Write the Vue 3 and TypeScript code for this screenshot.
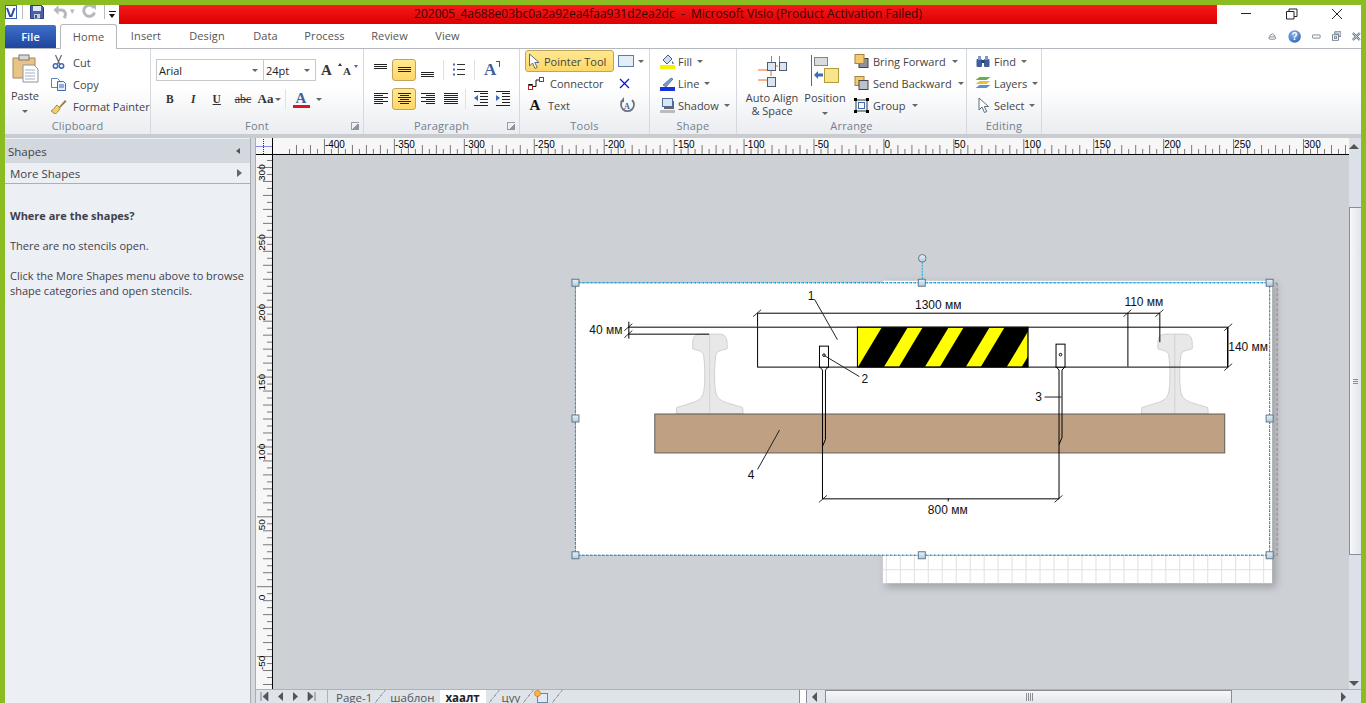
<script setup lang="ts">
const hTicks: { x: number; h: number }[] = []
for (let x = 288; x < 1349; x += 7) {
  const k = (x - 883 + 7000) / 7
  hTicks.push({ x, h: k % 10 === 0 ? 15 : k % 2 === 0 ? 9 : 5 })
}
const hLabels: { x: number; t: number }[] = []
for (let v = -400; v <= 300; v += 50) hLabels.push({ x: 883 + v * 1.4, t: v })

const vTicks: { y: number; w: number }[] = []
for (let y = 160; y < 690; y += 7) {
  const k = (587 - y + 7000) / 7
  vTicks.push({ y, w: k % 10 === 0 ? 15 : k % 2 === 0 ? 9 : 5 })
}
const vLabels: { y: number; t: number }[] = []
for (let v = 300; v >= -50; v -= 50) vLabels.push({ y: 587 - v * 1.4, t: v })

const gridX: number[] = []
for (let x = 883; x < 1273; x += 14) gridX.push(x + 3)
const handles: [number, number][] = [
  [575, 283], [922, 283], [1270.5, 283], [575, 419], [1270.5, 419], [575, 556], [922, 556], [1270.5, 556],
]
const railPath = (c: number): string =>
  `M${c - 17} 345 C${c - 17} 337 ${c - 15} 334.5 ${c - 9} 334.5 L${c + 9} 334.5 C${c + 15} 334.5 ${c + 17.5} 337 ${c + 17.5} 345 L${c + 17.5} 349 C${c + 14} 351 ${c + 7} 350 ${c + 6} 356 C${c + 4.5} 368 ${c + 4.5} 385 ${c + 6} 392 C${c + 8} 402 ${c + 14} 402 ${c + 33} 408 L${c + 33.5} 414 L${c - 33.5} 414 L${c - 33} 408 C${c - 14} 402 ${c - 8} 402 ${c - 6} 392 C${c - 4.5} 385 ${c - 4.5} 368 ${c - 6} 356 C${c - 7} 350 ${c - 14} 351 ${c - 17} 349 Z`
const stripes: number[] = [843, 884, 925, 966, 1007]
const tabs: string[] = ['Insert', 'Design', 'Data', 'Process', 'Review', 'View']
</script>

<template>
  <div class="app">
    <header class="titlebar">
      <div class="qat">
        <svg width="12" height="14" viewBox="0 0 12 14"><rect x=".5" y=".5" width="11" height="13" fill="#fff" stroke="#3b5fb5"/><path d="M2 3l3 8h1.500l3-8" fill="none" stroke="#2a4ca6" stroke-width="2"/></svg>
        <i class="qsep"></i>
        <svg class="q-save" width="14" height="14" viewBox="0 0 14 14"><path d="M.5.500h11l2 2v11H.500z" fill="#4c5fa8" stroke="#2d3a7c"/><rect x="3" y="1" width="8" height="5" fill="#dfe6f5"/><rect x="4" y="9" width="6" height="4.500" fill="#c8cfe0"/><rect x="5" y="10" width="2" height="3" fill="#444f7c"/></svg>
        <svg class="q-undo" width="14" height="14" viewBox="0 0 14 14"><path d="M11 13c3-4 1-8-3-8H4" fill="none" stroke="#b5b8bd" stroke-width="3"/><path d="M5.500 0v10L.500 5z" fill="#b5b8bd"/></svg>
        <span class="q-caret">▾</span>
        <svg class="q-redo" width="14" height="14" viewBox="0 0 14 14"><path d="M12 3A5.500 5.500 0 1 0 12.500 7.500" fill="none" stroke="#b5b8bd" stroke-width="3"/><path d="M9 0h5v5z" fill="#b5b8bd"/></svg>
        <i class="qsep second"></i>
        <div class="q-more"><i class="bar"></i><i class="tri"></i></div>
      </div>
      <div class="caption">202005_4a688e03bc0a2a92ea4faa931d2ea2dc&nbsp; -&nbsp; Microsoft Visio (Product Activation Failed)</div>
      <div class="winctl">
        <svg width="12" height="12" viewBox="0 0 12 12"><path d="M1 5.500h10" stroke="#222"/></svg>
        <svg width="12" height="12" viewBox="0 0 12 12"><path d="M.5 3.500h7.500v7.500H.500zM3 3.500V1h8v7.500H8" fill="none" stroke="#222"/></svg>
        <svg width="12" height="12" viewBox="0 0 12 12"><path d="M1 1l10 10M11 1L1 11" stroke="#222"/></svg>
      </div>
    </header>

    <nav class="tabs">
      <div class="file">File</div>
      <div class="tab active">Home</div>
      <div v-for="t in tabs" :key="t" class="tab" :class="'t-' + t">{{ t }}</div>
      <div class="tabicons">
        <svg width="11" height="9" viewBox="0 0 11 9"><path d="M1.500 4L5.500 1l4 3M2 5h7l1 2-2 1H3L1 7z" fill="#fff" stroke="#586a7c"/></svg>
        <svg width="17" height="17" viewBox="0 0 17 17"><defs><radialGradient id="hlp" cx=".4" cy=".3" r=".8"><stop offset="0" stop-color="#8fb4e6"/><stop offset="1" stop-color="#2f63b4"/></radialGradient></defs><circle cx="8.500" cy="8.500" r="8" fill="url(#hlp)"/><text x="8.500" y="13" text-anchor="middle" class="hlp">?</text></svg>
        <svg width="12" height="7" viewBox="0 0 12 7"><rect x=".5" y="1.500" width="10" height="4" rx="1" fill="#fff" stroke="#586a7c"/></svg>
        <svg width="12" height="12" viewBox="0 0 12 12"><path d="M3.500.500h8v6h-3v-3h-5z" fill="#dfe5ec" stroke="#586a7c"/><rect x=".5" y="4.500" width="8" height="7" fill="#fff" stroke="#586a7c"/><rect x="3" y="7" width="3" height="2" fill="none" stroke="#586a7c"/></svg>
        <svg width="11" height="11" viewBox="0 0 11 11"><path d="M1 1l9 9M10 1l-9 9" stroke="#586a7c" stroke-width="3"/><path d="M1 1l9 9M10 1l-9 9" stroke="#fff"/></svg>
      </div>
    </nav>

    <section class="ribbon">
      <div class="group g-clip">
        <div class="gbody">
          <div class="big paste">
            <svg width="27" height="29" viewBox="0 0 27 29"><path d="M1 4h22v20H1z" fill="#e9c487" stroke="#a5845a"/><rect x="7" y="1" width="10" height="5" fill="#d8d8d8" stroke="#777"/><path d="M11 11h11l4 4v13H11z" fill="#fff" stroke="#8a94a5"/><path d="M13 16h10M13 19h10M13 22h10M13 25h10" stroke="#a4b0c4"/></svg>
            <span>Paste</span><i class="caret"></i>
          </div>
          <div class="col c1">
            <div class="sm"><svg width="12" height="14" viewBox="0 0 12 14"><path d="M3 0l4 9M9 0L5 9" stroke="#667" stroke-width="1.200"/><circle cx="3" cy="11" r="2.200" fill="none" stroke="#3e67b0" stroke-width="1.500"/><circle cx="9" cy="11" r="2.200" fill="none" stroke="#3e67b0" stroke-width="1.500"/></svg><span>Cut</span></div>
            <div class="sm"><svg width="15" height="13" viewBox="0 0 15 13"><path d="M.5.500h6l2 2v7h-8z" fill="#fff" stroke="#5c82bd"/><path d="M6.500 3.500h6l2 2v7h-8z" fill="#e8f0fa" stroke="#3d6cb4"/><path d="M8 7h5M8 9h5" stroke="#3d6cb4"/></svg><span>Copy</span></div>
            <div class="sm"><svg width="17" height="15" viewBox="0 0 17 15"><path d="M9 8l6-7 1.500 1.500L10 9z" fill="#9b7a3c"/><path d="M1 12c3-1 4-5 6-6l3 3c-1 3-3 5-5 6z" fill="#f2cf72" stroke="#a58a40"/></svg><span>Format Painter</span></div>
          </div>
        </div>
        <div class="glabel">Clipboard</div>
      </div>

      <div class="group g-font">
        <div class="gbody colbody">
          <div class="frow top">
            <div class="combo font"><span>Arial</span><i class="caret"></i></div>
            <div class="combo size"><span>24pt</span><i class="caret"></i></div>
            <span class="fa large">A<i class="up"></i></span>
            <span class="fa small">A<i class="down"></i></span>
          </div>
          <div class="frow bottom">
            <b class="fb">B</b><em class="fb it">I</em><u class="fb">U</u>
            <s class="fb abc">abc</s><span class="fb aa">Aa<i class="caret"></i></span>
            <i class="vsep"></i>
            <span class="acolor">A<i></i></span><i class="caret"></i>
          </div>
        </div>
        <div class="glabel launch">Font<i class="launcher"></i></div>
      </div>

      <div class="group g-para">
        <div class="gbody colbody">
          <div class="prow">
            <svg class="ic" width="15" height="22" viewBox="0 0 15 22"><path d="M1 5.500h13M1 7.500h13M1 9.500h13" stroke="#222"/></svg>
            <div class="hot"><svg width="15" height="10" viewBox="0 0 15 10"><path d="M1 2.500h13M1 4.500h13M1 6.500h13" stroke="#222"/></svg></div>
            <svg class="ic" width="15" height="22" viewBox="0 0 15 22"><path d="M1 13.500h13M1 15.500h13M1 17.500h13" stroke="#222"/></svg>
            <i class="vsep"></i>
            <svg class="ic bl" width="14" height="22" viewBox="0 0 14 22"><path d="M5 5.500h8M5 10.500h8M5 15.500h8" stroke="#333"/><rect x="1" y="4.500" width="2" height="2" fill="#3d6cb4"/><rect x="1" y="9.500" width="2" height="2" fill="#3d6cb4"/><rect x="1" y="14.500" width="2" height="2" fill="#3d6cb4"/></svg>
            <i class="vsep"></i>
            <span class="fa para-a">A<i class="sup"></i></span>
          </div>
          <div class="prow second">
            <svg class="ic" width="15" height="22" viewBox="0 0 15 22"><path d="M1 5.500h14M1 7.500h9M1 9.500h14M1 11.500h9M1 13.500h14M1 15.500h9" stroke="#222"/></svg>
            <div class="hot"><svg width="15" height="12" viewBox="0 0 15 12"><path d="M1 .5h13M3 2.500h9M1 4.500h13M3 6.500h9M1 8.500h13M3 10.500h9" stroke="#222"/></svg></div>
            <svg class="ic" width="15" height="22" viewBox="0 0 15 22"><path d="M1 5.500h14M6 7.500h9M1 9.500h14M6 11.500h9M1 13.500h14M6 15.500h9" stroke="#222"/></svg>
            <svg class="ic just" width="15" height="22" viewBox="0 0 15 22"><path d="M1 5.500h14M1 7.500h14M1 9.500h14M1 11.500h14M1 13.500h14M1 15.500h14" stroke="#222"/></svg>
            <i class="vsep"></i>
            <svg class="ic ind" width="15" height="22" viewBox="0 0 15 22"><path d="M7 5.500h8M7 8.500h8M7 11.500h8M7 14.500h8M1 17.500h14M1 3.500h14" stroke="#222"/><path d="M1 10l4-3v6z" fill="#3d6cb4"/></svg>
            <svg class="ic ind" width="15" height="22" viewBox="0 0 15 22"><path d="M7 5.500h8M7 8.500h8M7 11.500h8M7 14.500h8M1 17.500h14M1 3.500h14" stroke="#222"/><path d="M5 10L1 7v6z" fill="#3d6cb4"/></svg>
          </div>
        </div>
        <div class="glabel launch">Paragraph<i class="launcher"></i></div>
      </div>

      <div class="group g-tools">
        <div class="gbody">
          <div class="col c-tool">
            <div class="sm pointer"><svg width="13" height="17" viewBox="0 0 13 17"><path d="M1.500 1v12l3-3 2.500 5.500 2.200-1L6.800 9.500H11z" fill="#fff" stroke="#5d6b80"/></svg><span>Pointer Tool</span></div>
            <div class="sm"><svg width="16" height="13" viewBox="0 0 16 13"><path d="M.5 11.500v-4h4M.5 11.500h4v-4M4.500 9.500H8V3h3" fill="none" stroke="#111"/><rect x="11.500" y=".5" width="4" height="4" fill="#fff" stroke="#c02020"/><rect x=".5" y="8.500" width="4" height="4" fill="#fff" stroke="#c02020"/></svg><span>Connector</span></div>
            <div class="sm"><span class="txt-a">A</span><span>Text</span></div>
          </div>
          <div class="col c-shape">
            <div class="sm rect"><svg width="16" height="12" viewBox="0 0 16 12"><rect x=".5" y=".5" width="15" height="11" fill="#e5eef8" stroke="#5d7da5"/></svg><i class="caret"></i></div>
            <div class="sm cross"><svg width="11" height="11" viewBox="0 0 11 11"><path d="M1 1l9 9M10 1l-9 9" stroke="#1414c8" stroke-width="1.300"/></svg></div>
            <div class="sm cross"><svg width="16" height="16" viewBox="0 0 16 16"><path d="M4 3a6.500 6.500 0 1 0 9 0" fill="none" stroke="#6d7580" stroke-width="1.800"/><path d="M4 0v5H0z" fill="#6d7580" transform="translate(1 0)"/><text x="8" y="12" text-anchor="middle" class="rot">A</text></svg></div>
          </div>
        </div>
        <div class="glabel">Tools</div>
      </div>

      <div class="group g-shape">
        <div class="gbody">
          <div class="col">
            <div class="sm lg"><svg width="15" height="15" viewBox="0 0 15 15"><path d="M3 6l5-5 4 4-5 5z" fill="#cfdcee" stroke="#3d6194"/><path d="M12 7c2 2 2 3 1 3s-1-1-1-3z" fill="#3d6194"/><rect y="11" width="15" height="4" fill="#f5f000"/></svg><span>Fill</span><i class="caret"></i></div>
            <div class="sm lg"><svg width="15" height="15" viewBox="0 0 15 15"><path d="M3 9l8-7 2 1-7 8z" fill="#7d9ccb" stroke="#3d6194" stroke-width=".7"/><rect y="11" width="15" height="4" fill="#1433dc"/></svg><span>Line</span><i class="caret"></i></div>
            <div class="sm lg"><svg width="15" height="15" viewBox="0 0 15 15"><rect x="4" y="3" width="10" height="8" fill="#666"/><rect x="2.500" y=".5" width="10" height="8" fill="#dbe6f5" stroke="#4d6c98"/><rect y="12" width="15" height="3" fill="#bcbcbc"/></svg><span>Shadow</span><i class="caret"></i></div>
          </div>
        </div>
        <div class="glabel">Shape</div>
      </div>

      <div class="group g-arr">
        <div class="gbody">
          <div class="big auto">
            <svg width="30" height="33" viewBox="0 0 30 33"><g fill="none" stroke="#f06a10"><path d="M14.500 1v6M22.500 1v6M1 15h11M1 25h11"/><path d="M16 11h5M14 15v6"/></g><g fill="#dbe5f1" stroke="#4c5d72"><rect x="10.500" y="7.500" width="8" height="8"/><rect x="22.500" y="7.500" width="7" height="8"/><rect x="10.500" y="22.500" width="8" height="9"/></g></svg>
            <span>Auto Align</span><span>&amp; Space</span>
          </div>
          <div class="big pos">
            <svg width="28" height="31" viewBox="0 0 28 31"><path d="M.5 0v31" stroke="#3d6cb4"/><rect x="3.500" y="2.500" width="13" height="8" fill="#d8dbe0" stroke="#7d8590"/><rect x="13.500" y="13.500" width="14" height="14" fill="#f8e48a" stroke="#b49a3c"/><path d="M3 20l4-4v2.500h5v3H7V24z" fill="#3d6cb4"/></svg>
            <span>Position</span><i class="caret"></i>
          </div>
          <div class="col c-order">
            <div class="sm"><svg width="14" height="14" viewBox="0 0 14 14"><rect x="4.500" y="4.500" width="9" height="9" fill="#8d949e" stroke="#444"/><rect x=".5" y=".5" width="9" height="9" fill="#f6c970" stroke="#a5843c"/></svg><span>Bring Forward</span><i class="caret"></i></div>
            <div class="sm"><svg width="14" height="14" viewBox="0 0 14 14"><rect x=".5" y=".5" width="9" height="9" fill="#f6c970" stroke="#a5843c"/><rect x="4.500" y="4.500" width="9" height="9" fill="#bcc2cb" stroke="#444"/></svg><span>Send Backward</span><i class="caret"></i></div>
            <div class="sm"><svg width="15" height="15" viewBox="0 0 15 15"><rect x="2" y="2" width="11" height="11" fill="none" stroke="#333"/><rect x="4.500" y="4.500" width="6" height="6" fill="none" stroke="#3d6cb4"/><g fill="#000"><rect width="3" height="3"/><rect x="12" width="3" height="3"/><rect y="12" width="3" height="3"/><rect x="12" y="12" width="3" height="3"/></g></svg><span>Group</span><i class="caret"></i></div>
          </div>
        </div>
        <div class="glabel">Arrange</div>
      </div>

      <div class="group g-edit">
        <div class="gbody">
          <div class="col">
            <div class="sm lg2"><svg width="15" height="13" viewBox="0 0 15 13"><rect x="1" y="4" width="5.500" height="8" rx="1" fill="#3d5f9c"/><rect x="8.500" y="4" width="5.500" height="8" rx="1" fill="#3d5f9c"/><rect x="2.500" y="1" width="3" height="4" fill="#7d99c8"/><rect x="9.500" y="1" width="3" height="4" fill="#7d99c8"/><rect x="6" y="5" width="3" height="3" fill="#26406f"/></svg><span>Find</span><i class="caret"></i></div>
            <div class="sm lg2"><svg width="15" height="14" viewBox="0 0 15 14"><path d="M4 1h11l-4 3H0z" fill="#65b04a"/><path d="M4 5h11l-4 3H0z" fill="#e6c23c"/><path d="M4 9h11l-4 3H0z" fill="#5f8fd0"/></svg><span>Layers</span><i class="caret"></i></div>
            <div class="sm lg2"><svg width="13" height="17" viewBox="0 0 13 17"><path d="M2.500 1v12l3-3 2.500 5.500 2.200-1L7.800 9.500H12z" fill="#fff" stroke="#5d6b80"/></svg><span>Select</span><i class="caret"></i></div>
          </div>
        </div>
        <div class="glabel">Editing</div>
      </div>
    </section>

    <main class="work">
      <aside class="panel">
        <div class="ph"><span>Shapes</span><i class="al"></i></div>
        <div class="pm"><span>More Shapes</span><i class="ar"></i></div>
        <div class="pbody">
          <p class="pt">Where are the shapes?</p>
          <p>There are no stencils open.</p>
          <p>Click the More Shapes menu above to browse shape categories and open stencils.</p>
        </div>
      </aside>

      <div class="doc">
        <div class="corner"><svg width="16" height="16" viewBox="0 0 16 16"><path d="M.5 8.500h15M7.500 1v15" stroke="#1a1ae0" stroke-dasharray="1 1"/></svg></div>
        <svg class="hruler" viewBox="272 138 1077 17" preserveAspectRatio="xMinYMin">
          <path v-for="t in hTicks" :key="t.x" :d="`M${t.x + 0.5} 154V${154 - t.h}`" stroke="#777"/>
          <text v-for="l in hLabels" :key="l.x" :x="l.x + 1" y="148" class="rl">{{ l.t }}</text>
          <path d="M272 154.500H1349" stroke="#000"/>
        </svg>
        <div class="upbtn"><i></i></div>

        <svg class="vruler" viewBox="255 155 17 535" preserveAspectRatio="xMinYMin">
          <path v-for="t in vTicks" :key="t.y" :d="`M271 ${t.y + 0.5}H${271 - t.w}`" stroke="#777"/>
          <text v-for="l in vLabels" :key="l.y" :transform="`translate(264 ${l.y + 14}) rotate(-90)`" class="rl">{{ l.t }}</text>
          <path d="M271.500 155V690" stroke="#000"/>
        </svg>

        <svg class="canvas" viewBox="272 155 1077 535" preserveAspectRatio="xMinYMin">
          <defs>
            <filter id="sh" x="-5%" y="-5%" width="110%" height="110%"><feGaussianBlur stdDeviation="4"/></filter>
            <linearGradient id="hd" x1="0" y1="0" x2="0" y2="1"><stop offset="0" stop-color="#e8f2f8"/><stop offset="1" stop-color="#b5cbdb"/></linearGradient>
            <clipPath id="yc"><rect x="857.500" y="327.500" width="171" height="40"/></clipPath>
          </defs>
          <rect x="886" y="284" width="391" height="304" fill="#777" opacity=".55" filter="url(#sh)"/>
          <rect x="883" y="281" width="390" height="303" fill="#fff"/>
          <path v-for="x in gridX" :key="x" :d="`M${x + 0.5} 556V584`" stroke="#e0e0e0"/>
          <path d="M883 570.500H1273" stroke="#e0e0e0"/>
          <rect x="575" y="283" width="696" height="273" fill="#fff"/>
          <path d="M1278 283.500V556.500H1271M1271 283.500H1278" fill="none" stroke="#888" stroke-dasharray="3 2"/>

          <path :d="railPath(709.500)" fill="#e8e8e8" stroke="#cfcfcf"/>
          <path :d="railPath(1175.500)" fill="#e8e8e8" stroke="#cfcfcf"/>
          <path d="M709.500 335V414M1175.500 335V414" stroke="#d2d2d2"/>

          <rect x="654.500" y="414.500" width="571" height="39" fill="#bfa083" stroke="#5f5c58"/>

          <g fill="none" stroke="#000">
            <rect x="757.500" y="327.500" width="471" height="40"/>
            <g clip-path="url(#yc)">
              <rect x="857.500" y="327.500" width="171" height="40" fill="#ff0"/>
              <path v-for="s in stripes" :key="s" :d="`M${s + 15} 367.500L${s + 39} 327.500H${s + 65}L${s + 41} 367.500Z`" fill="#000" stroke="none"/>
            </g>
            <rect x="857.500" y="327.500" width="171" height="40"/>
            <path d="M757.500 327V313.500H1160.500V342.500M1128.500 313.500V367M628 327.500H757M628 334.500H709M628.500 322V339"/>
            <path d="M753 317l8-7M1124 317l8-7M1156 317l8-7M624 331l8-7M624 338l8-7M1225 331l8-7M1225 371l8-7M1228.500 327.500V367" stroke-width=".8"/>
            <path d="M1228.500 327.500V367"/>
            <rect x="819.500" y="346.500" width="9" height="21" fill="#fff"/>
            <path d="M819.500 367l3 3.500V499.500M828.500 367l-3 3.500V440l-3 7"/>
            <rect x="1056.500" y="344.500" width="9" height="23" fill="#fff"/>
            <path d="M1056.500 367l3 3.500V499.500M1065.500 367l-3 3.500V438l-3 7"/>
            <path d="M822.500 499.500H1059.500M948.500 499V502"/>
            <path d="M819 503l8-7M1055 503l8-7" stroke-width=".8"/>
            <circle cx="824" cy="355.500" r="1.300"/>
            <circle cx="1061" cy="355" r="1.300"/>
            <path d="M814.500 299.500L837.500 340M779.500 430.500L757.500 470M824.500 356L859.500 377M1045 397.500H1062" stroke="#222"/>
          </g>

          <text x="605.500" y="334" class="dim">40 мм</text>
          <text x="938.500" y="309" class="dim">1300 мм</text>
          <text x="1144.500" y="306" class="dim">110 мм</text>
          <text x="1249" y="351" class="dim">140 мм</text>
          <text x="948" y="515" class="dim">800 мм</text>
          <text x="811" y="300" class="dim">1</text>
          <text x="865" y="383" class="dim">2</text>
          <text x="1039" y="401" class="dim">3</text>
          <text x="751" y="480" class="dim">4</text>

          <rect x="575" y="283" width="695.500" height="273" fill="none" stroke="#000" stroke-dasharray="1 3"/>
          <rect x="575" y="283" width="695.500" height="273" fill="none" stroke="#10a8ec" stroke-dasharray="3 1" stroke-dashoffset="2"/>
          <path d="M922.500 262V280" stroke="#10a8ec" stroke-dasharray="2 1"/>
          <rect v-for="h in handles" :key="h[0] + '-' + h[1]" :x="h[0] - 3.5" :y="h[1] - 3.5" width="7" height="7" fill="url(#hd)" stroke="#60788c"/>
          <circle cx="922.500" cy="258.500" r="3.800" fill="url(#hd)" stroke="#60788c"/>
        </svg>

        <div class="vscroll">
          <div class="vthumb"><i></i></div>
          <div class="dnbtn"><i></i></div>
        </div>

        <div class="statusrow">
          <div class="nav">
            <svg width="9" height="9" viewBox="0 0 9 9"><path d="M1 0v9M8 0v9L3 4.500z" fill="#555" stroke="#555" stroke-width=".7"/></svg>
            <svg width="7" height="9" viewBox="0 0 7 9"><path d="M6 0v9L1 4.500z" fill="#555"/></svg>
            <svg width="7" height="9" viewBox="0 0 7 9"><path d="M1 0v9l5-4.500z" fill="#555"/></svg>
            <svg width="9" height="9" viewBox="0 0 9 9"><path d="M8 0v9M1 0v9l5-4.500z" fill="#555" stroke="#555" stroke-width=".7"/></svg>
          </div>
          <div class="sheets">
            <span class="sheet s1">Page-1</span><i class="slant"></i>
            <span class="sheet s2">шаблон</span>
            <span class="sheet on">хаалт</span><i class="slant"></i>
            <span class="sheet s4">цуу</span><i class="slant"></i>
            <svg class="newp" width="14" height="13" viewBox="0 0 14 13"><rect x="3.500" y="3.500" width="10" height="9" fill="#e1e9f3" stroke="#6e86a5"/><circle cx="3.500" cy="3.500" r="3" fill="#f6b53c" stroke="#c0651c" stroke-dasharray="1 .6"/></svg><i class="slant"></i>
          </div>
          <div class="hsplit"><i></i></div>
          <div class="hscroll">
            <i class="la"></i>
            <div class="hthumb"><i></i></div>
            <i class="ra"></i>
          </div>
        </div>
      </div>
    </main>
  </div>
</template>

<style>
html, body { margin: 0; padding: 0; overflow: hidden; background: #8bbd22; }
</style>

<style scoped>
.app {
  width: 1366px; height: 703px; box-sizing: border-box; overflow: hidden;
  border: solid #8bbd22; border-width: 5px 5px 0 5px;
  display: flex; flex-direction: column; background: #fff;
  font: 11px "Open Sans", "Noto Sans", sans-serif; color: #444;
}
i { font-style: normal; display: block; }
.titlebar { height: 19px; display: flex; flex: none; }
.qat { width: 114px; display: flex; align-items: flex-start; position: relative; flex: none; padding-top: 0; }
.qsep { width: 1px; height: 14px; background: #bbb; margin-left: 5px; }
.q-save { margin-left: 7px; }
.q-undo { margin-left: 9px; }
.q-caret { color: #bbb; font-size: 9px; margin-left: 3px; line-height: 12px; }
.q-redo { margin-left: 7px; }
.qsep.second { margin-left: 8px; }
.q-more { width: 10px; height: 19px; margin-left: 2px; position: relative; }
.q-more .bar { width: 7px; height: 1px; background: #111; margin: 6px 0 0 2px; }
.q-more .tri { width: 0; height: 0; margin: 2px 0 0 2px; border: 3.5px solid transparent; border-top: 4px solid #111; border-bottom: 0; }
.caption {
  width: 1098px; flex: none; background: linear-gradient(#f51a1a, #dc0000);
  text-align: center; font-size: 12px; line-height: 18px; color: #3a0606;
}
.winctl { flex: 1; display: flex; padding: 3px 0 0 23px; gap: 33.500px; }

.tabs { height: 24px; flex: none; display: flex; align-items: flex-end; position: relative; border-bottom: 1px solid #b3b8be; letter-spacing: .1px; }
.file { width: 51px; height: 23px; line-height: 23px; text-align: center; color: #fff; font-weight: 600; border-radius: 2px 2px 0 0; background: linear-gradient(#3d6fc9, #1f459e); }
.tab { line-height: 24px; height: 24px; text-align: center; color: #555; }
.tab.active { width: 55px; height: 23px; line-height: 23px; margin-left: 4px; background: #fff; border: 1px solid #b3b8be; border-bottom: 0; border-radius: 3px 3px 0 0; margin-bottom: -1px; padding-bottom: 1px; }
.t-Insert { margin-left: 0; width: 58px; }
.t-Design { width: 64px; }
.t-Data { width: 53px; }
.t-Process { width: 65px; }
.t-Review { width: 65px; }
.t-View { width: 51px; }
.tabicons { position: absolute; right: 0; top: 3px; width: 100px; display: flex; align-items: center; height: 18px; gap: 11px; padding-left: 7px; box-sizing: border-box; }
.hlp { font: bold 13px "Liberation Sans", sans-serif; fill: #fff; }

.ribbon { height: 85px; flex: none; display: flex; background: linear-gradient(#fff 45%, #eaecf0); border-bottom: 4px solid; border-image: linear-gradient(#9a9ea4, #c9ccd1) 1; position: relative; box-sizing: content-box; }
.group { display: flex; flex-direction: column; border-right: 1px solid #d5d8dc; box-sizing: border-box; position: relative; flex: none; }
.g-clip { width: 146px; } .g-font { width: 213px; } .g-para { width: 156px; } .g-tools { width: 130px; }
.g-shape { width: 87px; } .g-arr { width: 230px; } .g-edit { width: 75px; }
.gbody { flex: 1; display: flex; padding-top: 2px; min-height: 0; }
.colbody { flex-direction: column; }
.glabel { height: 16px; line-height: 15px; text-align: center; color: #74808e; flex: none; position: relative; letter-spacing: .2px; }
.launcher { position: absolute; right: 4px; top: 4px; width: 7px; height: 7px; border: 1px solid #9aa0a8; border-width: 1px 0 0 1px; background: linear-gradient(135deg, transparent 50%, #8f959d 50%); }
.col { display: flex; flex-direction: column; }
.sm { height: 22px; display: flex; align-items: center; gap: 6px; white-space: nowrap; }
.caret { width: 0; height: 0; border: 3px solid transparent; border-top: 3px solid #666; border-bottom: 0; flex: none; }
.big { display: flex; flex-direction: column; align-items: center; line-height: 13px; }

.paste { width: 40px; margin-left: 0; padding-top: 3px; box-sizing: border-box; }
.paste span { margin-top: 6px; }
.paste .caret { margin-top: 8px; }
.c1 { margin-left: 5px; }
.c1 .sm { gap: 6px; }
.c1 svg { width: 17px; }
.g-font .frow { display: flex; align-items: center; }
.frow.top { height: 22px; margin: 8px 0 0 5px; }
.frow.bottom { height: 22px; margin: 7px 0 0 7px; }
.combo { height: 22px; box-sizing: border-box; border: 1px solid #c5c9ce; display: flex; align-items: center; justify-content: space-between; padding: 0 5px 0 2px; background: #fff; color: #222; }
.combo.font { width: 107px; border-right: 0; }
.combo.size { width: 53px; }
.fa { font: bold 15px "Liberation Serif", serif; color: #333; position: relative; display: block; }
.fa.large { margin-left: 5px; font-size: 15px; width: 21px; }
.fa.small { margin-left: 1px; font-size: 11px; margin-top: 2px; width: 12px; }
.up, .down { position: absolute; right: 0; top: 0; width: 0; height: 0; border: 2.500px solid transparent; }
.up { border-bottom: 3px solid #333; border-top: 0; right: 0; top: 1px; }
.down { border-top: 3px solid #3d6cb4; border-bottom: 0; right: -3px; top: 0; }
.fb { font: bold 11.500px "Liberation Serif", serif; color: #333; display: flex; align-items: center; width: 23.500px; justify-content: center; text-decoration-thickness: 1px; }
.it { font-style: italic; }
.abc { font-weight: 400; font-size: 12px; width: 29px; margin-left: 0; }
.aa { font-size: 13px; width: 24px; gap: 2px; }
.vsep { width: 1px; height: 20px; background: #dfe1e5; flex: none; }
.g-font .vsep { margin: 0 7px 0 3px; }
.acolor { font: bold 15px "Liberation Serif", serif; color: #3d5f9c; display: block; line-height: 15px; width: 17px; text-align: center; margin-right: 6px; }
.acolor i { height: 3px; background: #e01025; margin-top: -1px; }

.prow { display: flex; height: 22px; margin: 8px 0 0 9px; align-items: center; }
.prow.second { margin-top: 7px; }
.hot { width: 24px; height: 22px; box-sizing: border-box; border: 1px solid #c2a35e; border-radius: 3px; background: linear-gradient(#ffe98f, #ffd768); display: flex; align-items: center; justify-content: center; margin: 0 4px; flex: none; }
.prow .ic { flex: none; }
.prow .vsep { margin: 0 8px; }
.para-a { color: #3d5f9c; font-size: 17px; margin-left: 1px; width: 16px; }
.sup { position: absolute; right: 0; top: 1px; width: 3px; height: 5px; border: 1px solid #555; border-width: 1px 1px 0 0; }
.just { margin-left: 8px; }
.second .vsep { margin: 0 7px; }
.ind + .ind { margin-left: 7px; }

.c-tool { margin: -1px 0 0 5px; width: 90px; }
.c-tool .sm { padding-left: 5px; }
.pointer { box-sizing: border-box; height: 22px; background: linear-gradient(#ffe98f, #ffd768); border: 1px solid #c2a35e; border-radius: 3px; padding-left: 2px !important; margin-bottom: 0; gap: 3px !important; width: 89px; }
.c-tool .sm:not(.pointer) { padding-left: 3px; gap: 6px; }
.txt-a { font: bold 15px "Liberation Serif", serif; color: #111; width: 14px; text-align: center; }
.c-shape { margin: -1px 0 0 3px; }
.rect { gap: 4px; }
.cross { padding-left: 1px; }
.rot { font: bold 8px "Liberation Serif", serif; fill: #3d5f9c; }

.g-shape .col { margin: -1px 0 0 10px; }
.lg { gap: 3px; }
.lg .caret, .lg2 .caret, .c-order .caret { margin-left: 2px; }

.auto { width: 64px; padding: 4px 0 0 3px; margin-left: 0; box-sizing: content-box; }
.auto span:nth-of-type(1) { margin-top: 3px; }
.pos { width: 42px; padding-top: 4px; margin-left: 0; }
.pos span { margin-top: 5px; }
.pos .caret { margin-top: 8px; }
.c-order { margin: -1px 0 0 8px; }
.c-order .sm { gap: 4px; }
.c-order svg { width: 15px; }
.g-edit .col { margin: -1px 0 0 8px; }
.lg2 { gap: 3px; }
.lg2 svg { width: 16px; }

.work { flex: 1; display: flex; min-height: 0; background: #d5d8de; }
.panel { width: 245px; flex: none; background: #eceff4; border-right: 1px solid #a9adb3; box-sizing: content-box; color: #3f3f4c; }
.ph { height: 24px; margin-top: 1px; background: #d3d7de; display: flex; align-items: center; justify-content: space-between; padding: 0 10px 0 3px; font-size: 11.500px; }
.al { width: 0; height: 0; border: 3.500px solid transparent; border-right: 4px solid #555; border-left: 0; }
.ar { width: 0; height: 0; border: 4.500px solid transparent; border-left: 5px solid #666; border-right: 0; }
.pm { height: 20px; border-bottom: 1px solid #aab0b6; display: flex; align-items: center; justify-content: space-between; padding: 0 8px 0 5px; font-size: 11.500px; }
.pbody { padding: 0 5px; font-size: 11px; line-height: 15px; }
.pbody p { margin: 0 0 15px; }
.pt { font-weight: 700; padding-top: 24px; }
.doc {
  flex: 1; margin-left: 4px; display: grid; background: #cdd0d5;
  grid-template-columns: 17px 1fr 12px; grid-template-rows: 17px 1fr 14px;
  border-left: 1px solid #a9adb3; min-width: 0;
}
.corner { background: #f7f7f7; border-bottom: 1px solid #000; border-right: 1px solid #000; box-sizing: border-box; }
.corner svg { display: block; }
.hruler { width: 100%; height: 17px; display: block; background: #f7f7f7; }
.vruler { width: 17px; height: 100%; display: block; background: #f7f7f7; }
.canvas { width: 100%; height: 100%; display: block; background: #cdd0d5; }
.rl { font: 10px "Liberation Sans", sans-serif; fill: #000; }
.dim { font: 12px "Liberation Sans", sans-serif; fill: #111; text-anchor: middle; stroke: none; }
.upbtn { background: #dce0e8; position: relative; }
.upbtn i { position: absolute; left: 0; top: 6px; border: 5px solid transparent; border-bottom: 5px solid #555; border-top: 0; width: 0; height: 0; }
.vscroll { background: #dce0e8; position: relative; min-height: 0; }
.vthumb { position: absolute; left: 0; right: 0; top: 52px; height: 348px; background: linear-gradient(90deg, #f7f8fa, #e1e4ea); border: 1px solid #8a8e94; box-sizing: border-box; border-right: 0; }
.vthumb i { position: absolute; left: 3px; right: 3px; top: 171px; height: 5px; background: repeating-linear-gradient(#8a8e94 0 1px, transparent 1px 2px); }
.dnbtn { position: absolute; bottom: 3px; left: 0; }
.dnbtn i { border: 5px solid transparent; border-top: 5px solid #555; border-bottom: 0; width: 0; height: 0; }
.statusrow { grid-column: 1 / 4; display: flex; align-items: stretch; background: #dfe3ea; border-top: 1px solid #aeb2b8; box-sizing: border-box; min-width: 0; }
.nav { width: 72px; flex: none; display: flex; align-items: center; gap: 8px; padding-left: 4px; box-sizing: border-box; border-right: 1px solid #aeb2b8; }
.sheets { width: 472px; flex: none; display: flex; align-items: flex-start; color: #555; font-size: 11.500px; line-height: 16px; overflow: hidden; }
.sheet { height: 14px; display: block; white-space: nowrap; }
.s1 { margin-left: 8px; }
.s2 { margin-left: 2px; }
.on { background: #fff; color: #222; font-weight: 700; width: 46px; margin-left: 5px; text-align: center; }
.s4 { margin-left: 0; }
.slant { width: 16px; height: 14px; flex: none; background: linear-gradient(to top left, transparent 48%, #a5a9af 48%, #a5a9af 54%, transparent 54%); transform: scaleX(.7); }
.newp { flex: none; margin: 0 1px 0 -2px; }
.hsplit { width: 6px; flex: none; background: #fff; border: 1px solid #8a8e94; border-width: 0 1px; margin-left: -1px; }
.hscroll { flex: 1; position: relative; display: flex; align-items: center; min-width: 0; }
.la { width: 0; height: 0; border: 5px solid transparent; border-right: 5px solid #555; border-left: 0; margin-left: 5px; }
.ra { width: 0; height: 0; border: 5px solid transparent; border-left: 5px solid #555; border-right: 0; position: absolute; right: 15px; top: 2px; }
.hthumb { width: 407px; margin-left: 8px; height: 100%; box-sizing: border-box; background: linear-gradient(#f6f7f9, #e3e6ec); border: 1px solid #8a8e94; border-bottom: 0; position: relative; }
.hthumb i { position: absolute; top: 2px; bottom: 2px; left: 200px; width: 7px; background: repeating-linear-gradient(90deg, #8a8e94 0 1px, transparent 1px 2px); }
</style>
